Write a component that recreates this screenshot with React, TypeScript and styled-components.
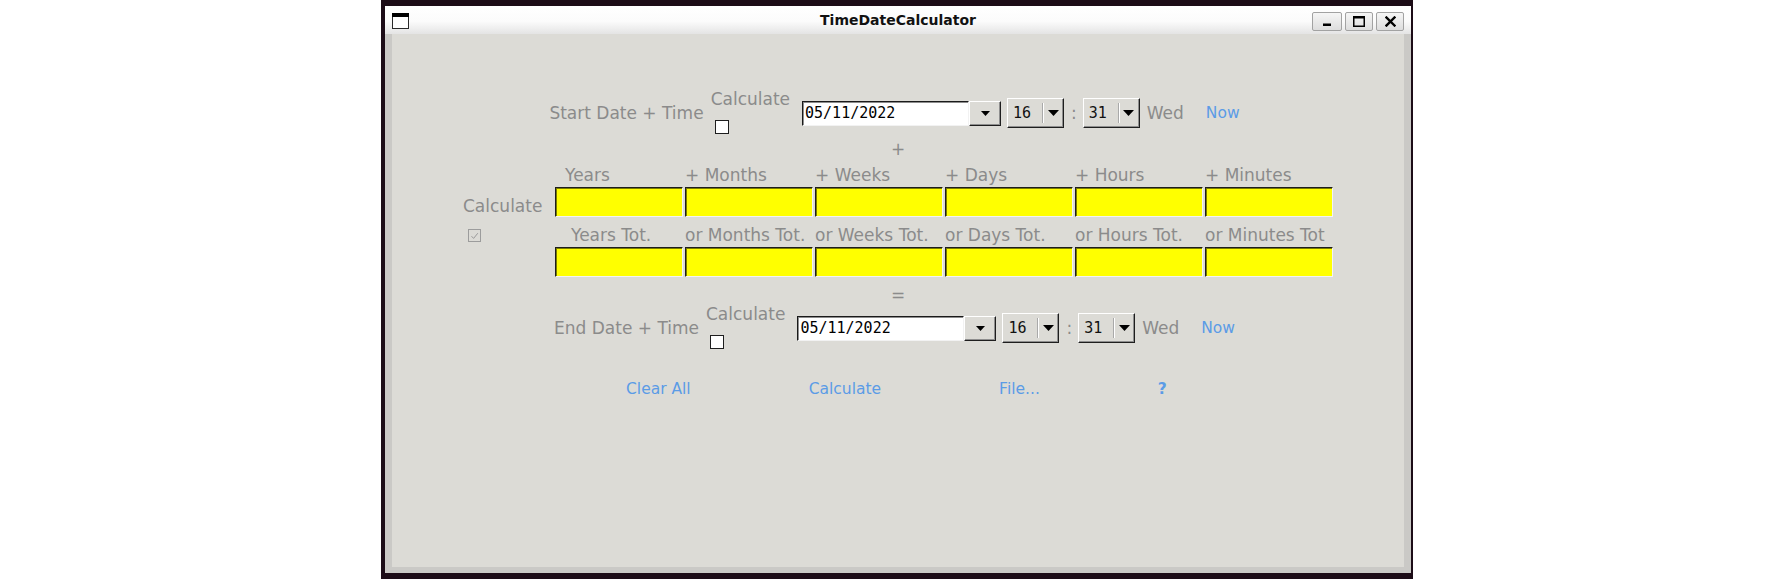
import styled, { createGlobalStyle } from "styled-components";

const GlobalStyle = createGlobalStyle`
  html, body {
    margin: 0;
    padding: 0;
    background: #ffffff;
  }
  body {
    font-family: "DejaVu Sans", "Liberation Sans", sans-serif;
  }
`;

const labelGray = "#8b8b8b";
const linkBlue = "#5b9be6";
const panelBg = "#dcdbd6";

const Desktop = styled.div`
  box-sizing: border-box;
  width: 1032px;
  height: 579px;
  margin-left: 381px;
  padding: 6px 2px 6px 4px;
  background: #1c0c17;
  display: flex;
`;

const Window = styled.div`
  flex: 1;
  display: flex;
  flex-direction: column;
`;

const TitleBar = styled.div`
  height: 28px;
  padding: 0 7px;
  display: grid;
  grid-template-columns: 1fr auto 1fr;
  align-items: center;
  background: linear-gradient(#ffffff, #fbfbfb 55%, #e4e4e4);
`;

const Title = styled.div`
  font-size: 14px;
  font-weight: bold;
  color: #111;
`;

const TitleButtons = styled.div`
  justify-self: end;
  display: flex;
  gap: 3px;
  margin-top: 3px;
`;

const TitleButton = styled.div<{ $wide?: boolean }>`
  box-sizing: border-box;
  width: ${(p) => (p.$wide ? 30 : 28)}px;
  height: 19px;
  border: 1px solid #a2a2a2;
  border-radius: 2px;
  background: linear-gradient(#f6f6f6, #dddddd);
  display: flex;
  align-items: center;
  justify-content: center;
`;

const IconSlot = styled.div`
  display: flex;
  margin-top: 2px;
`;

const Body = styled.div`
  flex: 1;
  background: ${panelBg};
  border: 7px solid #cac9c6;
  border-top: 0;
  border-bottom-width: 6px;
  padding-top: 56px;
  display: flex;
  flex-direction: column;
  align-items: center;
`;

const DateRow = styled.div`
  height: 46px;
  padding-right: 7px;
  display: flex;
  align-items: center;
`;

const FieldLabel = styled.span`
  font-size: 17px;
  line-height: 22px;
  color: ${labelGray};
  white-space: nowrap;
`;

const CheckStack = styled.div`
  align-self: flex-start;
  display: flex;
  flex-direction: column;
  margin: 0 12px 0 7px;
`;

const CheckCaption = styled.span`
  font-size: 17px;
  line-height: 18px;
  color: ${labelGray};
`;

const Checkbox = styled.span`
  box-sizing: border-box;
  width: 14px;
  height: 14px;
  margin: 12px 0 0 4px;
  background: #ffffff;
  border: 1px solid #1e1e1e;
`;

const Combo = styled.div`
  display: flex;
  height: 25px;
`;

const ComboEntry = styled.div`
  box-sizing: border-box;
  width: 167px;
  padding-left: 2px;
  background: #ffffff;
  border-top: 1px solid #1a1a1a;
  border-left: 1px solid #1a1a1a;
  border-bottom: 1px solid #f2f2f2;
  border-right: 1px solid #f2f2f2;
  box-shadow: inset 1px 1px 0 #8d8d8d;
  font-family: "DejaVu Sans Mono", "Liberation Mono", monospace;
  font-size: 15px;
  line-height: 23px;
  color: #000;
`;

const RaisedButton = styled.div`
  box-sizing: border-box;
  background: ${panelBg};
  border-top: 1px solid #ffffff;
  border-left: 1px solid #ffffff;
  border-bottom: 1px solid #1e1e1e;
  border-right: 1px solid #1e1e1e;
  box-shadow: inset -1px -1px 0 #8e8e8e;
  display: flex;
  align-items: center;
`;

const ComboButton = styled(RaisedButton)`
  width: 32px;
  justify-content: center;
`;

const Spin = styled(RaisedButton)`
  width: 57px;
  height: 30px;
  margin-left: ${(p: { $first?: boolean }) => (p.$first ? 6 : 0)}px;
`;

const SpinValue = styled.span`
  width: 29px;
  padding-left: 5px;
  font-family: "DejaVu Sans Mono", "Liberation Mono", monospace;
  font-size: 15px;
  color: #111;
`;

const SpinDivider = styled.span`
  width: 1px;
  height: 20px;
  background: #a9a9a9;
  box-shadow: 1px 0 0 #ffffff;
`;

const SpinArrow = styled.span`
  flex: 1;
  display: flex;
  justify-content: center;
`;

const Colon = styled(FieldLabel)`
  margin: 0 6px 0 7px;
`;

const DayName = styled(FieldLabel)`
  margin-left: 7px;
`;

const LinkButton = styled.span<{ $bold?: boolean }>`
  font-size: 15.5px;
  font-weight: ${(p) => (p.$bold ? "bold" : "normal")};
  line-height: 18px;
  color: ${linkBlue};
  white-space: nowrap;
`;

const NowLink = styled(LinkButton)`
  margin-left: 22px;
`;

const Operator = styled.div<{ $top: number }>`
  height: 20px;
  margin-top: ${(p) => p.$top}px;
  font-size: 17px;
  line-height: 20px;
  color: ${labelGray};
`;

const DurationGrid = styled.div`
  margin-top: 5px;
  display: grid;
  grid-template-columns: 90px repeat(6, 128px);
  grid-template-rows: 23px 30px 30px 30px;
  column-gap: 2px;
`;

const GridLabel = styled(FieldLabel)<{ $indent: number }>`
  align-self: end;
  margin-bottom: 1px;
  padding-left: ${(p) => p.$indent}px;
`;

const SideCaption = styled(FieldLabel)`
  align-self: end;
`;

const DisabledCheck = styled.span`
  box-sizing: border-box;
  align-self: end;
  width: 13px;
  height: 13px;
  margin: 0 0 5px 5px;
  border: 1px solid #9c9c9c;
  display: flex;
  align-items: center;
  justify-content: center;
`;

const YellowField = styled.div`
  box-sizing: border-box;
  background: #ffff00;
  border-top: 1px solid #1e1e1e;
  border-left: 1px solid #1e1e1e;
  border-bottom: 1px solid #f3f3f3;
  border-right: 1px solid #f3f3f3;
  box-shadow: inset 1px 1px 0 #7a7a00;
`;

const ActionRow = styled.div`
  align-self: flex-start;
  margin: 29px 0 0 234px;
  display: flex;
  gap: 118px;
`;

const DownArrow = ({ w, h }: { w: number; h: number }) => (
  <svg width={w} height={h} viewBox={`0 0 ${w} ${h}`}>
    <polygon points={`0,0 ${w},0 ${w / 2},${h}`} fill="#000" />
  </svg>
);

const WindowIcon = () => (
  <svg width="17" height="16" viewBox="0 0 17 16">
    <rect x="0.5" y="0.5" width="16" height="15" fill="#fff" stroke="#2a2a2a" />
    <rect x="0" y="0" width="17" height="4" fill="#000" />
  </svg>
);

const MinimizeIcon = () => (
  <svg width="10" height="10" viewBox="0 0 10 10">
    <rect x="1" y="6.5" width="8" height="2.5" fill="#000" />
  </svg>
);

const MaximizeIcon = () => (
  <svg width="12" height="11" viewBox="0 0 12 11">
    <rect x="0.75" y="1" width="10.5" height="9.25" fill="none" stroke="#000" strokeWidth="1.5" />
    <rect x="0" y="0" width="12" height="2.5" fill="#000" />
  </svg>
);

const CloseIcon = () => (
  <svg width="11" height="11" viewBox="0 0 11 11">
    <path d="M1.5 1.5 L9.5 9.5 M9.5 1.5 L1.5 9.5" stroke="#000" strokeWidth="2.4" strokeLinecap="square" />
  </svg>
);

const CheckMark = () => (
  <svg width="9" height="8" viewBox="0 0 9 8">
    <path d="M1.5 4.2 L3.6 6.4 L7.8 1.2" fill="none" stroke="#9a9a9a" strokeWidth="1" />
  </svg>
);

interface DateTimeRowProps {
  label: string;
}

const DateTimeRow = ({ label }: DateTimeRowProps) => (
  <DateRow>
    <FieldLabel>{label}</FieldLabel>
    <CheckStack>
      <CheckCaption>Calculate</CheckCaption>
      <Checkbox />
    </CheckStack>
    <Combo>
      <ComboEntry>05/11/2022</ComboEntry>
      <ComboButton>
        <DownArrow w={9} h={5} />
      </ComboButton>
    </Combo>
    <Spin $first>
      <SpinValue>16</SpinValue>
      <SpinDivider />
      <SpinArrow>
        <DownArrow w={11} h={6} />
      </SpinArrow>
    </Spin>
    <Colon>:</Colon>
    <Spin>
      <SpinValue>31</SpinValue>
      <SpinDivider />
      <SpinArrow>
        <DownArrow w={11} h={6} />
      </SpinArrow>
    </Spin>
    <DayName>Wed</DayName>
    <NowLink>Now</NowLink>
  </DateRow>
);

const addLabels: [string, number][] = [
  ["Years", 10],
  ["+ Months", 0],
  ["+ Weeks", 0],
  ["+ Days", 0],
  ["+ Hours", 0],
  ["+ Minutes", 0],
];

const totalLabels: [string, number][] = [
  ["Years Tot.", 16],
  ["or Months Tot.", 0],
  ["or Weeks Tot.", 0],
  ["or Days Tot.", 0],
  ["or Hours Tot.", 0],
  ["or Minutes Tot", 0],
];

const App = () => {
  return (
    <>
      <GlobalStyle />
      <Desktop>
        <Window>
          <TitleBar>
            <IconSlot>
              <WindowIcon />
            </IconSlot>
            <Title>TimeDateCalculator</Title>
            <TitleButtons>
              <TitleButton $wide>
                <MinimizeIcon />
              </TitleButton>
              <TitleButton>
                <MaximizeIcon />
              </TitleButton>
              <TitleButton>
                <CloseIcon />
              </TitleButton>
            </TitleButtons>
          </TitleBar>
          <Body>
            <DateTimeRow label="Start Date + Time" />
            <Operator $top={3}>+</Operator>
            <DurationGrid>
              <span />
              {addLabels.map(([text, indent]) => (
                <GridLabel key={text} $indent={indent}>
                  {text}
                </GridLabel>
              ))}
              <SideCaption>Calculate</SideCaption>
              {addLabels.map(([text]) => (
                <YellowField key={"a" + text} />
              ))}
              <DisabledCheck>
                <CheckMark />
              </DisabledCheck>
              {totalLabels.map(([text, indent]) => (
                <GridLabel key={text} $indent={indent}>
                  {text}
                </GridLabel>
              ))}
              <span />
              {totalLabels.map(([text]) => (
                <YellowField key={"t" + text} />
              ))}
            </DurationGrid>
            <Operator $top={8}>=</Operator>
            <DateTimeRow label="End Date + Time" />
            <ActionRow>
              <LinkButton>Clear All</LinkButton>
              <LinkButton>Calculate</LinkButton>
              <LinkButton>File...</LinkButton>
              <LinkButton $bold>?</LinkButton>
            </ActionRow>
          </Body>
        </Window>
      </Desktop>
    </>
  );
};

export default App;
